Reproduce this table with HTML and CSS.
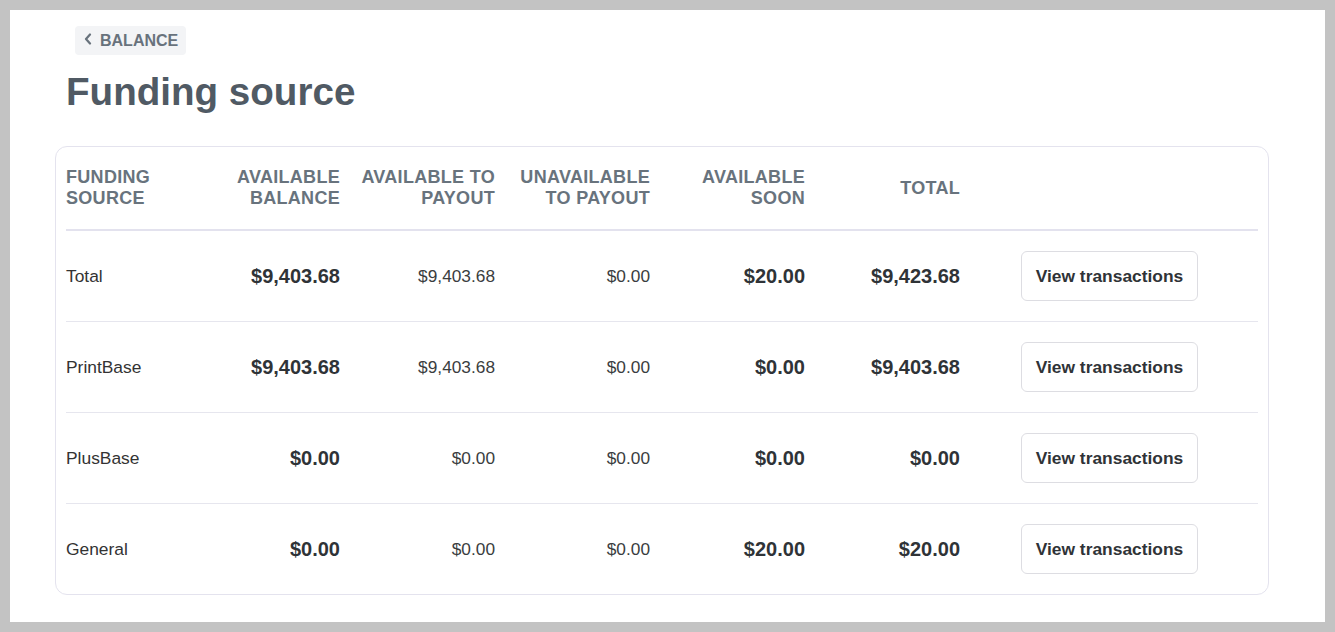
FILE: index.html
```html
<!DOCTYPE html>
<html lang="en">
<head>
<meta charset="utf-8">
<title>Funding source</title>
<link rel="stylesheet" href="styles.css">
</head>
<body>
<div class="page">
  <header class="head">
    <a class="back" href="#">
      <svg class="chev" width="8" height="12" viewBox="0 0 8 12" aria-hidden="true"><path d="M6 1.5 L2 6 L6 10.5" fill="none" stroke="currentColor" stroke-width="2.2" stroke-linecap="round" stroke-linejoin="round"/></svg>
      <span>BALANCE</span>
    </a>
    <h1 class="title">Funding source</h1>
  </header>

  <section class="card">
    <div class="row row-head">
      <div class="cell first">FUNDING SOURCE</div>
      <div class="cell">AVAILABLE BALANCE</div>
      <div class="cell">AVAILABLE TO PAYOUT</div>
      <div class="cell">UNAVAILABLE TO PAYOUT</div>
      <div class="cell">AVAILABLE SOON</div>
      <div class="cell">TOTAL</div>
      <div class="cell action"></div>
    </div>

    <div class="row">
      <div class="cell first name">Total</div>
      <div class="cell strong">$9,403.68</div>
      <div class="cell plain">$9,403.68</div>
      <div class="cell plain">$0.00</div>
      <div class="cell strong">$20.00</div>
      <div class="cell strong">$9,423.68</div>
      <div class="cell action"><button class="btn">View transactions</button></div>
    </div>

    <div class="row">
      <div class="cell first name">PrintBase</div>
      <div class="cell strong">$9,403.68</div>
      <div class="cell plain">$9,403.68</div>
      <div class="cell plain">$0.00</div>
      <div class="cell strong">$0.00</div>
      <div class="cell strong">$9,403.68</div>
      <div class="cell action"><button class="btn">View transactions</button></div>
    </div>

    <div class="row">
      <div class="cell first name">PlusBase</div>
      <div class="cell strong">$0.00</div>
      <div class="cell plain">$0.00</div>
      <div class="cell plain">$0.00</div>
      <div class="cell strong">$0.00</div>
      <div class="cell strong">$0.00</div>
      <div class="cell action"><button class="btn">View transactions</button></div>
    </div>

    <div class="row last">
      <div class="cell first name">General</div>
      <div class="cell strong">$0.00</div>
      <div class="cell plain">$0.00</div>
      <div class="cell plain">$0.00</div>
      <div class="cell strong">$20.00</div>
      <div class="cell strong">$20.00</div>
      <div class="cell action"><button class="btn">View transactions</button></div>
    </div>
  </section>
</div>
</body>
</html>
```

FILE: styles.css
```css
* { box-sizing: border-box; }

html, body {
  margin: 0;
  padding: 0;
}

body {
  background: #c3c3c3;
  padding: 10px;
  font-family: "Liberation Sans", Arial, sans-serif;
  color: #333;
}

.page {
  background: #fff;
  height: 612px;
  padding: 16px 56px 0 45px;
}

.head {
  padding-left: 11px;
}

.back {
  display: inline-flex;
  align-items: center;
  gap: 8px;
  height: 29px;
  margin-left: 9px;
  padding: 0 8px 0 9px;
  background: #f3f4f6;
  border-radius: 4px;
  color: #68727c;
  font-size: 16px;
  font-weight: 700;
  text-decoration: none;
}

.chev {
  display: block;
  margin-top: -3px;
}

.title {
  margin: 14px 0 0;
  font-size: 38.6px;
  line-height: 46px;
  font-weight: 700;
  color: #505a64;
}

.card {
  margin-top: 31px;
  border: 1px solid #e4e3ee;
  border-radius: 12px;
  padding: 0 10px;
}

.row {
  display: grid;
  grid-template-columns: 129px repeat(5, 155px) 1fr;
  align-items: center;
  height: 91px;
  border-bottom: 1px solid #e6e6ee;
}

.row.last {
  height: 90px;
  border-bottom: none;
}

.row-head {
  height: 84px;
  border-bottom: 2px solid #e3e2ee;
  font-size: 18px;
  line-height: 21px;
  font-weight: 700;
  letter-spacing: 0.3px;
  color: #68737d;
}

.cell {
  padding: 0 10px;
  text-align: right;
}

.cell.first {
  padding: 0 10px 0 0;
  text-align: left;
}

.name {
  font-size: 17.4px;
  color: #333;
}

.strong {
  font-size: 20px;
  font-weight: 700;
  color: #2f3337;
}

.plain {
  font-size: 17.3px;
  color: #3a3d40;
}

.cell.action {
  padding: 0 0 0 51px;
  text-align: left;
}

.btn {
  display: inline-flex;
  align-items: center;
  justify-content: center;
  width: 177px;
  height: 50px;
  padding: 0;
  background: #fff;
  border: 1px solid #dddde2;
  border-radius: 6px;
  font-family: "Liberation Sans", Arial, sans-serif;
  font-size: 17.4px;
  font-weight: 700;
  color: #2f3337;
  cursor: pointer;
}
```
